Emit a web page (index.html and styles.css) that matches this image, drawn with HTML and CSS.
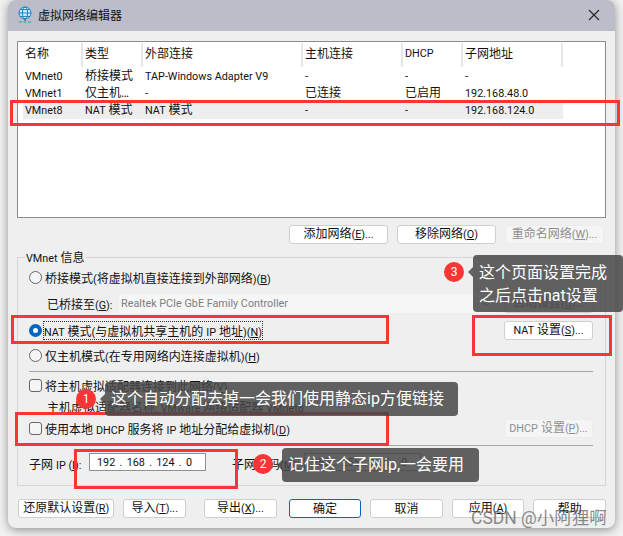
FILE: index.html
```html
<!DOCTYPE html>
<html lang="zh-CN">
<head>
  <meta charset="UTF-8">
  <title>虚拟网络编辑器</title>
  <link rel="stylesheet" href="styles.css">
</head>
<body>
  <div class="window">
    <div class="titlebar">
      <svg class="app-icon" width="16" height="18" viewBox="0 0 16 18" fill="none" stroke="#1a7fc4" stroke-width="1">
        <circle cx="8" cy="7" r="6" fill="#d8ecf8"/>
        <ellipse cx="8" cy="7" rx="2.6" ry="6"/>
        <path d="M2 7h12M3 3.6h10M3 10.4h10"/>
        <path d="M8 13v2" stroke="#555"/>
        <path d="M2 16h3M6.5 16h3M11 16h3" stroke="#1aa88a"/>
      </svg>
      <span class="title">虚拟网络编辑器</span>
      <svg class="close" width="12" height="12" viewBox="0 0 12 12" stroke="#222" stroke-width="1.1">
        <path d="M1 1l10 10M11 1L1 11"/>
      </svg>
    </div>

    <div class="content">
      <div class="list">
        <div class="list-row list-head">
          <span>名称</span><span>类型</span><span>外部连接</span><span>主机连接</span><span class="en">DHCP</span><span>子网地址</span>
        </div>
        <div class="list-row">
          <span class="en">VMnet0</span><span>桥接模式</span><span class="en">TAP-Windows Adapter V9</span><span class="en">-</span><span class="en">-</span><span class="en">-</span>
        </div>
        <div class="list-row">
          <span class="en">VMnet1</span><span>仅主机…</span><span class="en">-</span><span>已连接</span><span>已启用</span><span class="en">192.168.48.0</span>
        </div>
        <div class="list-row selected">
          <span class="en">VMnet8</span><span><span class="en">NAT</span> 模式</span><span><span class="en">NAT</span> 模式</span><span class="en">-</span><span class="en">-</span><span class="en">192.168.124.0</span>
        </div>
      </div>

      <div class="list-buttons">
        <button class="btn w-net">添加网络<span class="en">(<u>E</u>)...</span></button>
        <button class="btn w-net">移除网络<span class="en">(<u>O</u>)</span></button>
        <button class="btn w-net disabled">重命名网络<span class="en">(<u>W</u>)...</span></button>
      </div>

      <div class="group">
        <span class="legend"><span class="en">VMnet</span> 信息</span>

        <div class="row r-bridge">
          <span class="radio"></span>
          <span>桥接模式<span class="en">(</span>将虚拟机直接连接到外部网络<span class="en">)(<u>B</u>)</span></span>
        </div>
        <div class="row r-bridged">
          <span class="bridged-label">已桥接至<span class="en">(<u>G</u>):</span></span>
          <div class="select"><span class="en">Realtek PCIe GbE Family Controller</span>
            <svg width="9" height="6" viewBox="0 0 9 6" fill="none" stroke="#888"><path d="M.5 .5l4 4 4-4"/></svg>
          </div>
          <button class="btn w-side disabled-dark">自动设置<span class="en">(<u>U</u>)...</span></button>
        </div>
        <div class="row r-nat">
          <span class="radio checked"></span>
          <span class="focused"><span class="en">NAT</span> 模式<span class="en">(</span>与虚拟机共享主机的 <span class="en">IP</span> 地址<span class="en">)(<u>N</u>)</span></span>
          <button class="btn w-side push"><span class="en">NAT</span> 设置<span class="en">(<u>S</u>)...</span></button>
        </div>
        <div class="row r-host">
          <span class="radio"></span>
          <span>仅主机模式<span class="en">(</span>在专用网络内连接虚拟机<span class="en">)(<u>H</u>)</span></span>
        </div>

        <div class="sep s-one"></div>

        <div class="row r-check">
          <span class="check"></span>
          <span>将主机虚拟适配器连接到此网络<span class="en">(<u>V</u>)</span></span>
        </div>
        <div class="row r-adapter"><span>主机虚拟适配器名称<span class="en">:</span> <span class="en">VMware</span> 网络适配器 <span class="en">VMnet8</span></span></div>
        <div class="row r-dhcp">
          <span class="check"></span>
          <span>使用本地 <span class="en">DHCP</span> 服务将 <span class="en">IP</span> 地址分配给虚拟机<span class="en">(<u>D</u>)</span></span>
          <button class="btn w-side push disabled"><span class="en">DHCP</span> 设置<span class="en">(<u>P</u>)...</span></button>
        </div>

        <div class="sep s-two"></div>

        <div class="row r-subnet">
          <span class="subnet-label">子网 <span class="en">IP (<u>I</u>):</span></span>
          <div class="ip en"><span>192</span>.<span>168</span>.<span>124</span>.<span>0</span></div>
          <span class="mask-label">子网掩码<span class="en">(<u>M</u>):</span></span>
          <div class="ip en"><span>255</span>.<span>255</span>.<span>255</span>.<span>0</span></div>
        </div>
      </div>

      <div class="footer">
        <button class="btn f-restore">还原默认设置<span class="en">(<u>R</u>)</span></button>
        <button class="btn f-import">导入<span class="en">(<u>T</u>)...</span></button>
        <button class="btn f-export">导出<span class="en">(<u>X</u>)...</span></button>
        <button class="btn f-std default">确定</button>
        <button class="btn f-std">取消</button>
        <button class="btn f-std">应用<span class="en">(<u>A</u>)</span></button>
        <button class="btn f-std">帮助</button>
      </div>
    </div>
  </div>

  <!-- 标注 -->
  <div class="mark m-row"></div>
  <div class="mark m-nat"></div>
  <div class="mark m-natbtn"></div>
  <div class="mark m-dhcp"></div>
  <div class="mark m-ip"></div>

  <div class="tip t-one">这个自动分配去掉一会我们使用静态ip方便链接</div>
  <div class="tip t-two">记住这个子网ip,一会要用</div>
  <div class="tip t-three">这个页面设置完成<br>之后点击nat设置</div>
  <span class="dot d-one">1</span>
  <span class="dot d-two">2</span>
  <span class="dot d-three">3</span>

  <div class="watermark">CSDN @小阿狸啊</div>
</body>
</html>
```

FILE: styles.css
```css
body {
  margin: 0;
  width: 623px;
  height: 536px;
  overflow: hidden;
  background-color: #f1f1f1;
  font-family: Roboto, "Noto Sans CJK SC", sans-serif;
  font-size: 12px;
  color: #111;
}

/* 西文比中文小一号 */
.en {
  font-size: 10.8px;
}

.window {
  width: 607px;
  height: 528px;
  margin-left: 8px;
  background-color: #efefef;
  border-radius: 8px;
  overflow: hidden;
  box-shadow: 0 2px 10px rgba(0, 0, 0, 0.4);
}

.titlebar {
  height: 31px;
  box-sizing: border-box;
  display: flex;
  align-items: center;
  padding: 0 15px 2px 9px;
  background-color: #bdbdc9;
}

.app-icon {
  margin-right: 5px;
}

.title {
  flex: 1;
  font-size: 12px;
}

.content {
  padding: 10px 9px 0;
}

/* 列表 */
.list {
  height: 177px;
  box-sizing: border-box;
  border: 1px solid #8c8c8c;
  background-color: #fff;
  padding-top: 1px;
}

.list-row {
  display: grid;
  grid-template-columns: 60px 60px 160px 100px 60px 100px;
  height: 17px;
  line-height: 17px;
  margin-left: 5px;
  width: 540px;
}

.list-row > span {
  padding-left: 2px;
  white-space: nowrap;
  overflow: hidden;
}

.list-head {
  height: 25px;
  line-height: 22px;
}

.list-head > span {
  height: 24px;
  border-right: 2px solid #e6e6e6;
  box-sizing: border-box;
}

.list-row.selected {
  background-color: #eeeeee;
}

.list-buttons {
  display: flex;
  justify-content: flex-end;
  gap: 9px;
  margin: 7px 2px 0 0;
}

.btn {
  height: 19px;
  padding: 0;
  box-sizing: border-box;
  border: 1px solid #cfcfcf;
  border-radius: 3px;
  background-color: #fff;
  font-family: inherit;
  font-size: 12px;
  line-height: 16px;
  color: #111;
  white-space: nowrap;
}

.w-net {
  width: 99px;
}

.w-side {
  width: 89px;
}

.disabled {
  background-color: #f5f5f5;
  border-color: #ececec;
  color: #8f8f8f;
}

.disabled-dark {
  background-color: #f0f0f0;
  color: #777;
}

/* VMnet 信息 */
.group {
  position: relative;
  height: 229px;
  box-sizing: border-box;
  margin-top: 13px;
  padding: 0 12px 0 11px;
  border: 1px solid #d6d6d6;
}

.legend {
  position: absolute;
  left: 7px;
  top: -8px;
  padding: 0 1px;
  background-color: #efefef;
  line-height: 17px;
}

.row {
  display: flex;
  align-items: center;
  white-space: nowrap;
}

.r-bridge { height: 20px; margin-top: 9px; }
.r-bridged { height: 19px; margin-top: 7px; padding-left: 18px; }
.r-nat { height: 20px; margin-top: 7px; }
.r-host { height: 20px; margin-top: 5px; }
.r-check { height: 20px; margin-top: 3px; }
.r-adapter { height: 20px; margin-top: 1px; padding-left: 18px; }
.r-dhcp { height: 20px; margin-top: 2px; }
.r-subnet { height: 18px; margin-top: 7px; }

.radio {
  width: 11px;
  height: 11px;
  margin-right: 3px;
  border: 1px solid #666;
  border-radius: 50%;
  background-color: #f5f5f5;
  flex: none;
}

.radio.checked {
  box-sizing: content-box;
  width: 5px;
  height: 5px;
  border: 4px solid #0067c0;
  background-color: #fff;
}

.check {
  width: 11px;
  height: 11px;
  margin-right: 3px;
  border: 1px solid #666;
  border-radius: 3px;
  background-color: #f5f5f5;
  flex: none;
}

.focused {
  outline: 1px dotted #333;
  margin-left: -1px;
}

.bridged-label {
  width: 72px;
}

.select {
  width: 378px;
  height: 19px;
  box-sizing: border-box;
  display: flex;
  align-items: center;
  justify-content: space-between;
  padding: 0 6px 0 2px;
  margin-right: 7px;
  background-color: #f6f6f6;
  color: #7d7d7d;
}

.push {
  margin-left: auto;
}

.sep {
  height: 1px;
  background-color: #a5a5a5;
}

.s-one { margin-top: 6px; }
.s-two { margin-top: 7px; }

.subnet-label {
  width: 60px;
  padding-top: 2px;
}

.mask-label {
  width: 72px;
  margin-left: 26px;
  padding-top: 2px;
}

.ip {
  width: 117px;
  height: 18px;
  box-sizing: border-box;
  display: flex;
  align-items: center;
  padding: 0 13px 0 7px;
  justify-content: space-between;
  border: 1px solid #8f8f8f;
  background-color: #fff;
}

.footer {
  display: flex;
  gap: 9px;
  margin: 13px 0 0 1px;
}

.f-restore { width: 97px; }
.f-import { width: 63px; }
.f-export { width: 73px; margin-left: 9px; }
.f-std { width: 73px; }
.f-std:nth-child(4) { margin-left: 3px; }

.default {
  border-color: #0067c0;
}

/* 标注 */
.mark {
  position: absolute;
  box-sizing: border-box;
  border: 3px solid #f93535;
}

.m-row { left: 10px; top: 100px; width: 610px; height: 26px; }
.m-nat { left: 11px; top: 315px; width: 378px; height: 29px; }
.m-natbtn { left: 472px; top: 315px; width: 140px; height: 41px; }
.m-dhcp { left: 15px; top: 412px; width: 374px; height: 34px; }
.m-ip { left: 74px; top: 449px; width: 164px; height: 40px; }

.tip {
  position: absolute;
  box-sizing: border-box;
  padding: 0 6px;
  border-radius: 4px;
  background-color: rgba(70, 70, 70, 0.85);
  color: #fff;
  font-size: 16px;
  white-space: nowrap;
}

.tip::before {
  content: "";
  position: absolute;
  left: -5px;
  top: 50%;
  margin-top: -5px;
  border-top: 5px solid transparent;
  border-bottom: 5px solid transparent;
  border-right: 5px solid rgba(70, 70, 70, 0.85);
}

.t-one { left: 105px; top: 382px; width: 353px; height: 34px; line-height: 34px; }
.t-two { left: 282px; top: 448px; width: 197px; height: 34px; line-height: 34px; }
.t-three { left: 473px; top: 255px; width: 150px; height: 57px; line-height: 23px; padding-top: 6px; }
.t-three::before { top: 12px; margin-top: 0; }

.dot {
  position: absolute;
  width: 20px;
  height: 20px;
  border-radius: 50%;
  background-color: #f93535;
  color: #fff;
  font-size: 12px;
  line-height: 20px;
  text-align: center;
}

.d-one { left: 76px; top: 389px; }
.d-two { left: 253px; top: 454px; }
.d-three { left: 444px; top: 262px; }

.watermark {
  position: absolute;
  left: 471px;
  top: 507px;
  font-size: 17.5px;
  line-height: 22px;
  color: rgba(100, 100, 100, 0.75);
  white-space: nowrap;
}
```
